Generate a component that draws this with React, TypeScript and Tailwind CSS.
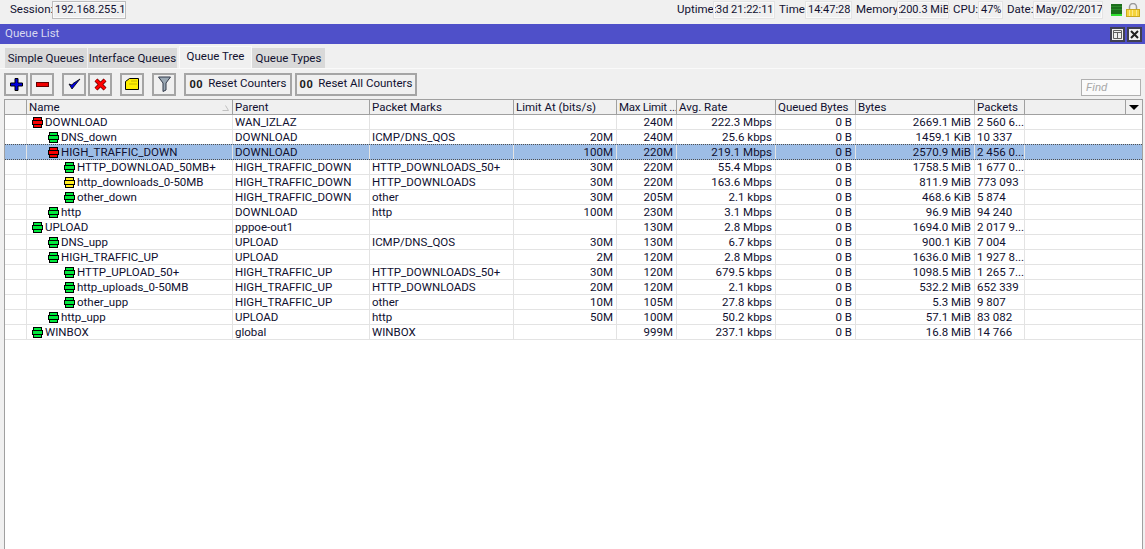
import { FC } from "react";

interface QueueRow {
  name: string;
  level: number;
  color: string;
  parent: string;
  marks: string;
  limitAt: string;
  maxLimit: string;
  avgRate: string;
  queued: string;
  bytes: string;
  packets: string;
  selected?: boolean;
}

const GREEN = "#00e83c";
const RED = "#f80000";
const YELLOW = "#ffee20";

const rows: QueueRow[] = [
  { name: "DOWNLOAD", level: 0, color: RED, parent: "WAN_IZLAZ", marks: "", limitAt: "", maxLimit: "240M", avgRate: "222.3 Mbps", queued: "0 B", bytes: "2669.1 MiB", packets: "2 560 6..." },
  { name: "DNS_down", level: 1, color: GREEN, parent: "DOWNLOAD", marks: "ICMP/DNS_QOS", limitAt: "20M", maxLimit: "240M", avgRate: "25.6 kbps", queued: "0 B", bytes: "1459.1 KiB", packets: "10 337" },
  { name: "HIGH_TRAFFIC_DOWN", level: 1, color: RED, parent: "DOWNLOAD", marks: "", limitAt: "100M", maxLimit: "220M", avgRate: "219.1 Mbps", queued: "0 B", bytes: "2570.9 MiB", packets: "2 456 0...", selected: true },
  { name: "HTTP_DOWNLOAD_50MB+", level: 2, color: GREEN, parent: "HIGH_TRAFFIC_DOWN", marks: "HTTP_DOWNLOADS_50+", limitAt: "30M", maxLimit: "220M", avgRate: "55.4 Mbps", queued: "0 B", bytes: "1758.5 MiB", packets: "1 677 0..." },
  { name: "http_downloads_0-50MB", level: 2, color: YELLOW, parent: "HIGH_TRAFFIC_DOWN", marks: "HTTP_DOWNLOADS", limitAt: "30M", maxLimit: "220M", avgRate: "163.6 Mbps", queued: "0 B", bytes: "811.9 MiB", packets: "773 093" },
  { name: "other_down", level: 2, color: GREEN, parent: "HIGH_TRAFFIC_DOWN", marks: "other", limitAt: "30M", maxLimit: "205M", avgRate: "2.1 kbps", queued: "0 B", bytes: "468.6 KiB", packets: "5 874" },
  { name: "http", level: 1, color: GREEN, parent: "DOWNLOAD", marks: "http", limitAt: "100M", maxLimit: "230M", avgRate: "3.1 Mbps", queued: "0 B", bytes: "96.9 MiB", packets: "94 240" },
  { name: "UPLOAD", level: 0, color: GREEN, parent: "pppoe-out1", marks: "", limitAt: "", maxLimit: "130M", avgRate: "2.8 Mbps", queued: "0 B", bytes: "1694.0 MiB", packets: "2 017 9..." },
  { name: "DNS_upp", level: 1, color: GREEN, parent: "UPLOAD", marks: "ICMP/DNS_QOS", limitAt: "30M", maxLimit: "130M", avgRate: "6.7 kbps", queued: "0 B", bytes: "900.1 KiB", packets: "7 004" },
  { name: "HIGH_TRAFFIC_UP", level: 1, color: GREEN, parent: "UPLOAD", marks: "", limitAt: "2M", maxLimit: "120M", avgRate: "2.8 Mbps", queued: "0 B", bytes: "1636.0 MiB", packets: "1 927 8..." },
  { name: "HTTP_UPLOAD_50+", level: 2, color: GREEN, parent: "HIGH_TRAFFIC_UP", marks: "HTTP_DOWNLOADS_50+", limitAt: "30M", maxLimit: "120M", avgRate: "679.5 kbps", queued: "0 B", bytes: "1098.5 MiB", packets: "1 265 7..." },
  { name: "http_uploads_0-50MB", level: 2, color: GREEN, parent: "HIGH_TRAFFIC_UP", marks: "HTTP_DOWNLOADS", limitAt: "20M", maxLimit: "120M", avgRate: "2.1 kbps", queued: "0 B", bytes: "532.2 MiB", packets: "652 339" },
  { name: "other_upp", level: 2, color: GREEN, parent: "HIGH_TRAFFIC_UP", marks: "other", limitAt: "10M", maxLimit: "105M", avgRate: "27.8 kbps", queued: "0 B", bytes: "5.3 MiB", packets: "9 807" },
  { name: "http_upp", level: 1, color: GREEN, parent: "UPLOAD", marks: "http", limitAt: "50M", maxLimit: "100M", avgRate: "50.2 kbps", queued: "0 B", bytes: "57.1 MiB", packets: "83 082" },
  { name: "WINBOX", level: 0, color: GREEN, parent: "global", marks: "WINBOX", limitAt: "", maxLimit: "999M", avgRate: "237.1 kbps", queued: "0 B", bytes: "16.8 MiB", packets: "14 766" },
];

const QueueIcon: FC<{ color: string }> = ({ color }) => (
  <svg width="11" height="11" viewBox="0 0 11 11" className="shrink-0">
    <rect x="1" y="0" width="9" height="11" fill="#000" />
    <rect x="0" y="3" width="11" height="5" fill="#000" />
    <rect x="2" y="1" width="7" height="2" fill={color} />
    <rect x="1" y="4" width="9" height="3" fill={color} />
    <rect x="2" y="8" width="7" height="2" fill={color} />
  </svg>
);

const StatusField: FC<{ label: string; value: string; labelWidth: string; width: string }> = ({ label, value, labelWidth, width }) => (
  <div className="flex items-center">
    <span className={`${labelWidth} whitespace-nowrap`}>{label}</span>
    <span className={`${width} h-[18px] border-2 border-[#fafafa] text-[11px] outline-1 -outline-offset-1 outline-[#e4e4e4] pl-px leading-[14px] whitespace-nowrap`}>{value}</span>
  </div>
);

const ToolButton: FC<{ children: React.ReactNode; className?: string }> = ({ children, className }) => (
  <button className={`flex h-[23px] w-[24px] items-center justify-center border-2 border-[#a5a5a5] bg-[#f0f0f0] ${className ?? ""}`}>
    {children}
  </button>
);

const headCell = "shrink-0 border-r border-[#a0a0a0] pl-[2px] h-full whitespace-nowrap overflow-hidden";
const cell = "shrink-0 h-full border-r border-[#e3e3e3] whitespace-nowrap overflow-hidden";

export default function App() {
  return (
    <div className="flex h-[549px] w-[1145px] flex-col overflow-hidden bg-[#f0f0f0] text-[11.5px] text-[#101030] [font-family:Roboto,sans-serif]">
      {/* session bar */}
      <div className="flex h-[24px] items-start justify-between pt-px pr-[5px] pl-[10px]">
        <div className="flex items-center">
          <span className="w-[42px]">Session:</span>
          <span className="h-[18px] w-[74px] border-2 border-[#fafafa] pl-px text-[11px] leading-[14px] whitespace-nowrap outline-1 -outline-offset-1 outline-[#bdbdbd]">192.168.255.1</span>
        </div>
        <div className="flex items-center gap-[4px]">
          <StatusField label="Uptime:" value="3d 21:22:11" labelWidth="w-[36px]" width="w-[62px]" />
          <StatusField label="Time:" value="14:47:28" labelWidth="w-[26px]" width="w-[47px]" />
          <StatusField label="Memory:" value="200.3 MiB" labelWidth="w-[41px]" width="w-[52px]" />
          <StatusField label="CPU:" value="47%" labelWidth="w-[25px]" width="w-[25px]" />
          <StatusField label="Date:" value="May/02/2017" labelWidth="w-[26px]" width="w-[70px]" />
          <div className="ml-[4px] flex h-[12px] w-[11px] flex-col bg-[#1c6e1c]">
            <div className="mt-[2px] h-px bg-[#2a8a2a]" />
            <div className="mt-[2px] h-px bg-[#2a8a2a]" />
            <div className="mt-auto h-[2px] bg-[#30e030]" />
          </div>
          <svg width="14" height="14" viewBox="0 0 14 14">
            <path d="M3.5 7V4a3.5 3.5 0 0 1 7 0v3" fill="none" stroke="#9a9a9a" strokeWidth="1.5" />
            <rect x="0.5" y="6.5" width="13" height="7" fill="#f5d33c" stroke="#c9a820" />
            <path d="M3.5 7v6M6.5 7v6M10.5 7v6" stroke="#fbe88a" />
          </svg>
        </div>
      </div>

      {/* window title */}
      <div className="flex h-[20px] items-center justify-between bg-[#4f50c9] pr-[3px] pl-[5px] text-[#d8d8f0]">
        <span>Queue List</span>
        <div className="flex gap-[2px]">
          <button className="flex h-[15px] w-[15px] items-center justify-center border-2 border-[#404050] bg-[#f0f0f0]">
            <svg width="9" height="9" viewBox="0 0 9 9">
              <path d="M0.5 0.5h8v8h-8zM0.5 2.5h8M4.5 2.5v6h4" fill="none" stroke="#606060" />
            </svg>
          </button>
          <button className="flex h-[15px] w-[15px] items-center justify-center border-2 border-[#404050] bg-[#f0f0f0]">
            <svg width="9" height="9" viewBox="0 0 9 9">
              <path d="M1 1l7 7M8 1l-7 7" fill="none" stroke="#202020" strokeWidth="2" />
            </svg>
          </button>
        </div>
      </div>

      {/* tabs */}
      <div className="flex h-[24px] items-end pl-[5px]">
        <div className="flex h-[20px] w-[82px] items-center justify-center bg-[#d9d9d9] pt-px">Simple Queues</div>
        <div className="ml-px flex h-[20px] w-[89px] items-center justify-center bg-[#d9d9d9] pt-px">Interface Queues</div>
        <div className="ml-[2px] flex h-[22px] w-[73px] items-center justify-center border-x border-t border-[#fafafa] bg-[#f0f0f0] pb-px">Queue Tree</div>
        <div className="flex h-[20px] w-[73px] items-center justify-center bg-[#d9d9d9] pt-px">Queue Types</div>
      </div>

      {/* toolbar */}
      <div className="flex h-[28px] items-center border-t border-[#fafafa] pl-[4px] pt-[3px]">
        <ToolButton>
          <svg width="13" height="13" viewBox="0 0 13 13">
            <path d="M5 0.5h3v4.5h4.5v3H8v4.5H5V8H0.5V5H5z" fill="#0000e0" stroke="#000" />
          </svg>
        </ToolButton>
        <ToolButton className="ml-[2px]">
          <svg width="13" height="5" viewBox="0 0 13 5">
            <rect x="0.5" y="0.5" width="12" height="4" fill="#f00000" stroke="#600" />
          </svg>
        </ToolButton>
        <ToolButton className="ml-[8px]">
          <svg width="13" height="12" viewBox="0 0 13 12">
            <path d="M1 6l3 5 8-10-7 4.5-1 1.5z" fill="#0000e0" stroke="#000" strokeWidth="0.8" />
          </svg>
        </ToolButton>
        <ToolButton className="ml-[2px]">
          <svg width="13" height="13" viewBox="0 0 13 13">
            <path d="M2 2l9 9M11 2l-9 9" fill="none" stroke="#500" strokeWidth="4.2" />
            <path d="M2 2l9 9M11 2l-9 9" fill="none" stroke="#ff0000" strokeWidth="2.8" />
          </svg>
        </ToolButton>
        <ToolButton className="ml-[8px]">
          <svg width="14" height="12" viewBox="0 0 14 12">
            <path d="M0.5 3.5l4-3h9v11h-13z" fill="#ffee00" stroke="#000" />
            <path d="M6 3h6M4 6h8" stroke="#c8b800" />
          </svg>
        </ToolButton>
        <ToolButton className="ml-[8px]">
          <svg width="13" height="16" viewBox="0 0 13 16">
            <path d="M0.5 1h12L8 7v7l-3 1.5V7z" fill="#9aa8b4" stroke="#303848" />
          </svg>
        </ToolButton>
        <button className="ml-[8px] flex h-[23px] w-[108px] items-center justify-center gap-[5px] border-2 border-[#a5a5a5]">
          <b className="text-[11px] leading-none tracking-[0.5px] text-[#202020]">00</b>Reset Counters
        </button>
        <button className="ml-[3px] flex h-[23px] w-[122px] items-center justify-center gap-[5px] border-2 border-[#a5a5a5]">
          <b className="text-[11px] leading-none tracking-[0.5px] text-[#202020]">00</b>Reset All Counters
        </button>
        <div className="mr-[4px] ml-auto flex h-[17px] w-[60px] items-center self-end border border-[#b0b0b0] bg-[#fafafa] pl-[4px] text-[#a8a8a8] italic">Find</div>
      </div>

      {/* table */}
      <div className="mt-[3px] mr-[2px] ml-[4px] flex min-h-0 flex-1 flex-col border-x border-t border-[#a0a0a0] bg-white">
        <div className="flex h-[15px] shrink-0 items-center border-b border-[#a0a0a0] bg-[#f0f0f0] leading-[14px]">
          <div className={`${headCell} w-[22px]`} />
          <div className={`${headCell} relative w-[206px]`}>
            Name
            <svg width="7" height="6" viewBox="0 0 7 6" className="absolute top-[5px] right-[3px]">
              <path d="M3.5 0.5l3 5h-6" fill="none" stroke="#c0c0c0" />
            </svg>
          </div>
          <div className={`${headCell} w-[137px]`}>Parent</div>
          <div className={`${headCell} w-[144px]`}>Packet Marks</div>
          <div className={`${headCell} w-[103px]`}>Limit At (bits/s)</div>
          <div className={`${headCell} w-[60px] tracking-[-0.3px]`}>Max Limit ...</div>
          <div className={`${headCell} w-[99px]`}>Avg. Rate</div>
          <div className={`${headCell} w-[80px]`}>Queued Bytes</div>
          <div className={`${headCell} w-[119px]`}>Bytes</div>
          <div className={`${headCell} w-[50px]`}>Packets</div>
          <div className="h-full w-[101px] shrink-0 border-r border-[#a0a0a0]" />
          <div className="flex h-full flex-1 items-center justify-center">
            <div className="h-0 w-0 border-x-[5px] border-t-[5px] border-x-transparent border-t-black" />
          </div>
        </div>
        {rows.map((row) => (
          <div
            key={row.name}
            className={`flex shrink-0 items-center leading-[14px] ${
              row.selected ? "-mt-px h-[16px] border-y border-dotted border-[#505050] bg-[#9dbde6]" : "h-[15px] border-b border-[#e3e3e3]"
            }`}
          >
            <div className={`${cell} w-[22px]`} />
            <div
              className={`${cell} flex w-[206px] items-center gap-[2px] ${
                row.level === 0 ? "pl-[5px]" : row.level === 1 ? "pl-[21px]" : "pl-[37px]"
              }`}
            >
              <QueueIcon color={row.color} />
              <span>{row.name}</span>
            </div>
            <div className={`${cell} w-[137px] pl-[2px]`}>{row.parent}</div>
            <div className={`${cell} w-[144px] pl-[2px]`}>{row.marks}</div>
            <div className={`${cell} w-[103px] pr-[3px] text-right`}>{row.limitAt}</div>
            <div className={`${cell} w-[60px] pr-[3px] text-right`}>{row.maxLimit}</div>
            <div className={`${cell} w-[99px] pr-[3px] text-right`}>{row.avgRate}</div>
            <div className={`${cell} w-[80px] pr-[3px] text-right`}>{row.queued}</div>
            <div className={`${cell} w-[119px] pr-[3px] text-right`}>{row.bytes}</div>
            <div className={`${cell} w-[50px] pl-[2px]`}>{row.packets}</div>
          </div>
        ))}
      </div>
    </div>
  );
}
